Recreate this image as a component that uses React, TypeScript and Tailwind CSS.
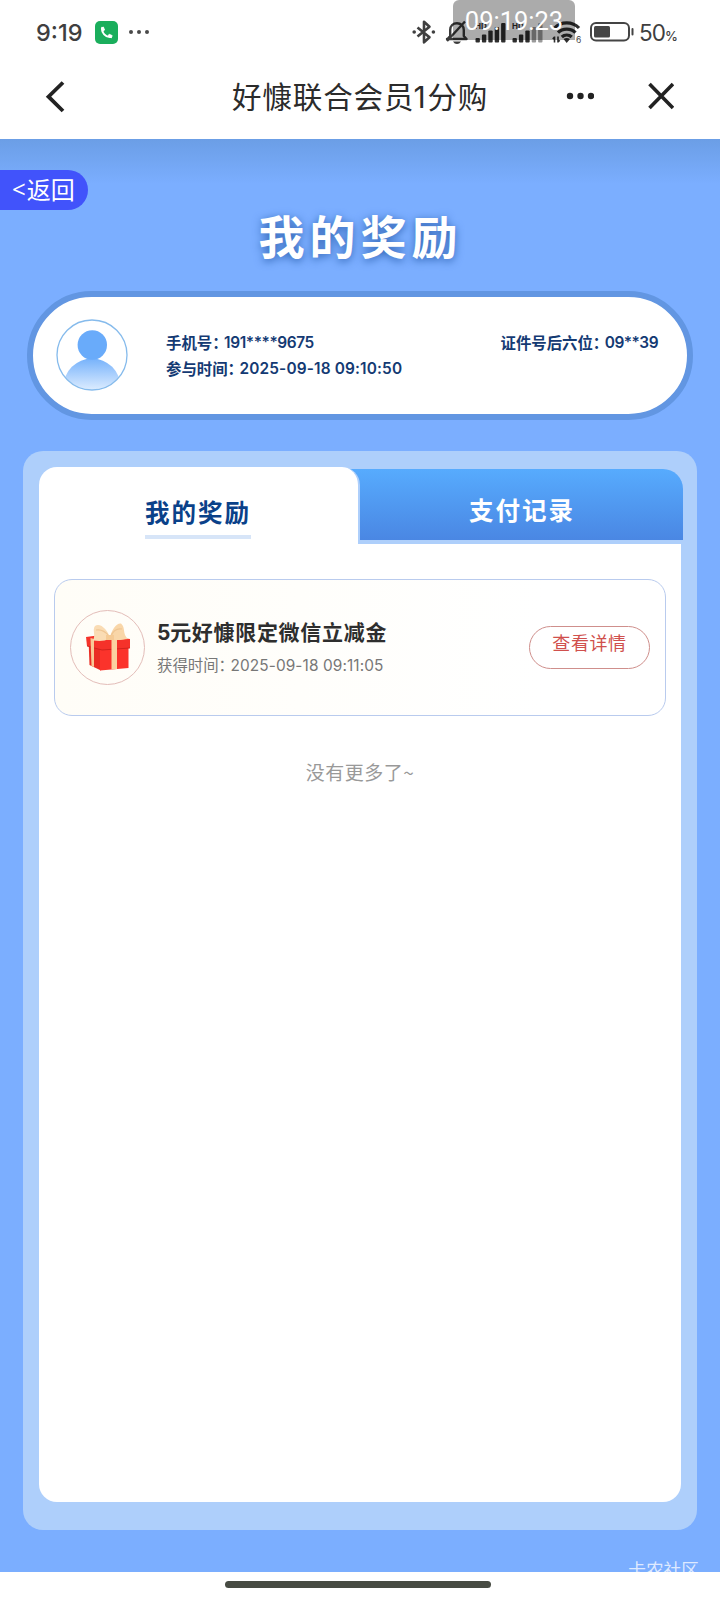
import React from 'react';

const BluetoothIcon = () => (
  <svg width="24" height="26" viewBox="0 0 24 26" fill="none">
    <path
      d="M5.5 8.500 L17.5 18.300 L12 23.300 V2.700 L17.5 7.700 L5.5 17.500"
      stroke="#3f3f3f"
      strokeWidth="2.6"
      strokeLinejoin="round"
    />
    <circle cx="2.2" cy="13" r="1.8" fill="#3f3f3f" />
    <circle cx="21.4" cy="13" r="1.8" fill="#3f3f3f" />
  </svg>
);

const MuteBellIcon = () => (
  <svg width="24" height="26" viewBox="0 0 24 26" fill="none">
    <path
      d="M2 20 H21.5 L18.800 17 V11 C18.800 7 16 4.300 12 4.300 C8 4.300 5.200 7 5.200 11 V17 L2.500 20"
      stroke="#3a3a3a"
      strokeWidth="2.4"
      strokeLinecap="round"
      strokeLinejoin="round"
    />
    <path d="M8 22.500 H16 Q14.500 25 12 25 Q9.500 25 8 22.500" fill="#3a3a3a" />
    <path d="M2 22 L20 2.5" stroke="#3a3a3a" strokeWidth="2.4" />
  </svg>
);

interface SignalIconProps {
  strength: number;
}

const SignalIcon = ({ strength }: SignalIconProps) => (
  <svg width="32" height="22" viewBox="0 0 32 22">
    <text
      x="0"
      y="8"
      fontSize="8"
      fontWeight="700"
      fill="#2e2e2e"
      fontFamily="Inter, sans-serif"
    >
      HD
    </text>
    {[4.5, 8, 12, 15.5, 19.5].map((h, i) => (
      <rect
        key={h}
        x={0.5 + i * 6.4}
        y={21.5 - h}
        width="4.4"
        height={h}
        rx="1"
        fill={i < strength ? '#2e2e2e' : '#9a9a9a'}
      />
    ))}
  </svg>
);

const WifiIcon = () => (
  <svg width="30" height="24" viewBox="0 0 30 24" fill="none">
    <g stroke="#2e2e2e" strokeWidth="3.2">
      <path d="M2.5 8 C9 1.200 20.500 1.200 27 8" />
      <path d="M6 12.700 C10.500 8 19 8 23.500 12.700" />
      <path d="M9.800 17 C12.500 14.300 17 14.300 19.700 17" />
    </g>
    <path d="M11.500 19 Q14.700 17 18 19 L14.700 23 Z" fill="#2e2e2e" />
    <path
      d="M2.500 16.500 V22.500 M0.800 19 L2.500 17 M6 16.500 V22.500 M7.700 20.200 L6 22"
      stroke="#2e2e2e"
      strokeWidth="1.6"
    />
    <text x="24" y="23" fontSize="8.500" fill="#444" fontFamily="Inter, sans-serif">
      6
    </text>
  </svg>
);

const BatteryIcon = () => (
  <svg width="44" height="20" viewBox="0 0 44 20" fill="none">
    <rect x="1" y="1" width="38" height="17.500" rx="5" stroke="#444" strokeWidth="2" />
    <rect x="4" y="4" width="16" height="11.500" rx="1.500" fill="#444" />
    <path d="M42.500 7 V12.500" stroke="#444" strokeWidth="2" strokeLinecap="round" />
  </svg>
);

const StatusBar = () => {
  return (
    <div className="relative flex h-16 items-center font-['Inter',sans-serif] text-[#3f3f3f]">
      <span className="ml-9 w-[59px] pt-[2px] text-[23.5px] leading-none font-medium">
        9:19
      </span>
      <div className="flex h-[23px] w-[23px] items-center justify-center rounded-[5px] bg-[#1aae5c]">
        <svg width="13" height="13" viewBox="0 0 13 13" fill="none">
          <path
            d="M2.600 1.200 C0.500 6 6 12.300 11.500 10.800"
            stroke="#fff"
            strokeWidth="2"
          />
          <path
            d="M1.200 2 L3.400 1 L4.600 4 L3 5.200 Z M8 9.800 L9.200 8.200 L12.200 9.600 L11.400 11.800 Z"
            fill="#fff"
            stroke="#fff"
            strokeWidth="0.800"
            strokeLinejoin="round"
          />
        </svg>
      </div>
      <div className="ml-[11px] flex gap-[4px]">
        <span className="h-1 w-1 rounded-full bg-[#4a4a4a]" />
        <span className="h-1 w-1 rounded-full bg-[#4a4a4a]" />
        <span className="h-1 w-1 rounded-full bg-[#4a4a4a]" />
      </div>

      <div className="ml-auto flex items-center">
        <BluetoothIcon />
        <div className="ml-[9px]">
          <MuteBellIcon />
        </div>
        <div className="ml-[6px]">
          <SignalIcon strength={5} />
        </div>
        <div className="ml-[5px]">
          <SignalIcon strength={3} />
        </div>
        <div className="ml-[8px]">
          <WifiIcon />
        </div>
        <div className="ml-2">
          <BatteryIcon />
        </div>
      </div>
      <div className="mr-[42px] ml-[5px] flex w-[39px] items-baseline pt-[3px]">
        <span className="text-[22.5px] leading-none tracking-[-1px]">50</span>
        <span className="text-[13px] leading-none font-medium">%</span>
      </div>

      {/* clock overlay, sits above the icons */}
      <div className="absolute top-0 left-[453px] flex h-10 w-[122px] justify-center rounded-t-[6px] bg-black/33 pt-[9px] font-['Roboto',sans-serif] text-[25.500px] leading-[25px] text-white">
        09:19:23
      </div>
    </div>
  );
};

const NavBar = () => {
  return (
    <div className="flex h-[74.500px] items-start pt-[15px] text-[#2b2b2b]">
      <svg className="mt-[1px] ml-[45px]" width="22" height="34" viewBox="0 0 22 34" fill="none">
        <path d="M18 2.500 L3.500 16.700 L18 31" stroke="#222" strokeWidth="3.800" />
      </svg>
      <h1 className="mt-[-1px] ml-[165px] w-[300px] text-[29.500px] leading-[34px] tracking-[0.9px] whitespace-nowrap">
        好慷联合会员
        <span className="ml-[-1px] inline-block w-[14px] font-['Inter',sans-serif] text-[30px] tracking-normal">
          1
        </span>
        分购
      </h1>
      <svg className="mt-[13px] ml-[34px]" width="28" height="8" viewBox="0 0 28 8">
        <circle cx="4" cy="4" r="3.200" fill="#222" />
        <circle cx="14.500" cy="4" r="3.200" fill="#222" />
        <circle cx="25" cy="4" r="3.200" fill="#222" />
      </svg>
      <svg className="mt-[3px] ml-[54px]" width="26" height="28" viewBox="0 0 26 28" fill="none">
        <path d="M1.500 2 L25 26 M25 2 L1.500 26" stroke="#222" strokeWidth="3.600" />
      </svg>
    </div>
  );
};

const Avatar = () => (
  <svg width="72" height="72" viewBox="0 0 72 72">
    <defs>
      <linearGradient id="body" x1="0" y1="0" x2="0" y2="1">
        <stop offset="0" stopColor="#76b2fb" />
        <stop offset="0.550" stopColor="#dcecff" />
      </linearGradient>
      <clipPath id="face">
        <circle cx="36" cy="36" r="34.500" />
      </clipPath>
    </defs>
    <g clipPath="url(#face)">
      <ellipse cx="36" cy="68" rx="28.500" ry="28.500" fill="url(#body)" />
    </g>
    <circle cx="36.300" cy="26" r="14.700" fill="#69abfa" />
    <circle cx="36" cy="36" r="35" fill="none" stroke="#86bbec" strokeWidth="1.300" />
  </svg>
);

const GiftIcon = () => (
  <svg width="46" height="50" viewBox="0 0 46 50">
    <path d="M3.500 17 L16 20 V48.500 L4.500 43 Z" fill="#ea2c24" />
    <path d="M15 20 H43.500 V46 L15 48.500 Z" fill="#fb332b" />
    <path d="M1 15 L16 13 L45 17 V26 L17 28 L2 24 Z" fill="#f5322a" />
    <path d="M2 24 L17 28 L45 26" fill="none" stroke="#c91f1a" strokeWidth="0.800" />
    <path d="M26.500 16 H32 V47 L26.500 47.600 Z" fill="#fbd2a0" />
    <path d="M5.500 16 L9 17 V45 L6.500 44 Z" fill="#f8c896" />
    <path d="M25 16 C19 20 13 19 8 18.500 C11 13 7 8 10 4 C15 0 23 8 25 16 Z" fill="#fadcb4" />
    <path d="M25 16 C26 9 31 1 36 1.500 C41 6 37 12 43 17 C36 18 30 19 25 16 Z" fill="#f9d6a8" />
    <path d="M24 14 C20 9 16 7 11 8 M26 14 C28 9 32 6 37 7" fill="none" stroke="#efc592" strokeWidth="1.200" />
    <path d="M21 13 H29 V18 H21 Z" fill="#f5ca95" />
  </svg>
);

interface InfoLineProps {
  label: string;
  value: string;
  valueClass: string;
}

const InfoLine = ({ label, value, valueClass }: InfoLineProps) => (
  <p className="flex items-center whitespace-nowrap">
    <span className="mt-[-1px] mr-[-3.500px]">{label}：</span>
    <span className={valueClass}>{value}</span>
  </p>
);

const ProfileCard = () => {
  return (
    <div className="mx-[27px] mt-[21.500px] flex h-[129px] shrink-0 rounded-full border-[6.500px] border-[#6296e2] bg-white pt-[22px] pl-[23px]">
      <Avatar />
      <div className="mt-[11px] ml-[38px] flex w-[492px] flex-col text-[15.400px] leading-[26px] font-semibold text-[#143a73]">
        <div className="flex justify-between">
          <InfoLine
            label="手机号"
            value="191****9675"
            valueClass="font-['Inter',sans-serif] tracking-[-0.400px]"
          />
          <InfoLine
            label="证件号后六位"
            value="09**39"
            valueClass="font-['Inter',sans-serif] tracking-[-0.500px]"
          />
        </div>
        <InfoLine
          label="参与时间"
          value="2025-09-18 09:10:50"
          valueClass="font-['Inter',sans-serif] tracking-[0.150px]"
        />
      </div>
    </div>
  );
};

const Tabs = () => {
  return (
    <div className="flex h-[77px]">
      <div className="relative z-10 flex w-[321px] shrink-0 justify-center rounded-t-[18px] border-r-2 border-[#aecffb] bg-white">
        <div className="mt-[27px] ml-[-1px] h-[45px] border-b-4 border-[#d7e5f8] text-[24.500px] leading-[36px] font-bold tracking-[2px] text-[#0a4189]">
          我的奖励
        </div>
      </div>
      <div className="mt-[2px] ml-[-12px] flex h-[71px] w-[335px] shrink-0 justify-center rounded-tr-[20px] bg-linear-to-b from-[#57abfe] to-[#4a87e3] pt-[23px] pl-[13px] text-[24.500px] leading-[36px] font-bold tracking-[2px] text-white">
        支付记录
      </div>
    </div>
  );
};

const RewardCard = () => {
  return (
    <div className="flex h-[137px] items-center rounded-[18px] border border-[#b9cbee] bg-linear-to-r from-[#fffdf7] to-white to-80% pl-[15px]">
      <div className="flex h-[75px] w-[75px] items-center justify-center rounded-full border border-[#e3bdb9]">
        <GiftIcon />
      </div>
      <div className="ml-[12px] flex-1 pt-[1px] whitespace-nowrap">
        <h3 className="text-[21px] leading-[32px] font-bold tracking-[0.7px] text-[#2e2e2e]">
          <span className="mr-[-1px] font-['Inter',sans-serif]">5</span>
          元好慷限定微信立减金
        </h3>
        <p className="flex items-center text-[15.400px] leading-[31px] text-[#777]">
          <span className="mt-[-1px] mr-[-3.500px]">获得时间：</span>
          <span className="pt-[1px] font-['Inter',sans-serif] tracking-[0.100px]">
            2025-09-18 09:11:05
          </span>
        </p>
      </div>
      <button className="mr-[15px] h-[43px] w-[121px] rounded-full border border-[#cf8f8c] pb-[11px] text-[18px] leading-none tracking-[0.6px] text-[#d0504d]">
        查看详情
      </button>
    </div>
  );
};

export default function App() {
  return (
    <div className="flex h-[1600px] w-[720px] flex-col overflow-hidden bg-white font-['Noto_Sans_CJK_SC',sans-serif]">
      <StatusBar />
      <NavBar />
      <main className="flex h-[1433.500px] flex-col overflow-hidden bg-[#7baeff] bg-linear-to-b from-[#6b9ee6] to-[#7baeff] to-[45px]">
        <div className="mt-[31.500px] flex h-[40px] w-[88px] shrink-0 items-center rounded-r-full bg-[#4153fb] pb-[3px] pl-[12px] text-[24px] whitespace-nowrap text-white">
          <span className="mr-[1px] font-['Open_Sans',sans-serif] font-medium">&lt;</span>返回
        </div>
        <h2 className="mt-[-11px] pl-[1px] text-center text-[46px] leading-[70px] font-bold tracking-[5px] text-white [text-shadow:0_2px_8px_#2f64b4]">
          我的奖励
        </h2>
        <ProfileCard />
        <section className="mx-[23px] mt-[31px] flex h-[1079px] shrink-0 flex-col rounded-[20px] bg-[#aecffb] px-4 pt-4 pb-7">
          <Tabs />
          <div className="flex w-[642px] flex-1 flex-col rounded-b-[18px] bg-white px-[15px] pt-[35px]">
            <RewardCard />
            <p className="mt-[41px] text-center text-[19px] leading-[30px] tracking-[0.5px] text-[#999]">
              没有更多了~
            </p>
          </div>
        </section>
        <div className="mt-[26px] mr-[21px] h-4 shrink-0 self-end overflow-hidden text-[17.700px] leading-[26px] text-white/75">
          卡农社区
        </div>
      </main>
      <div className="mt-[9px] ml-[225px] h-[7px] w-[266px] rounded-full bg-[#474b43]" />
    </div>
  );
}
